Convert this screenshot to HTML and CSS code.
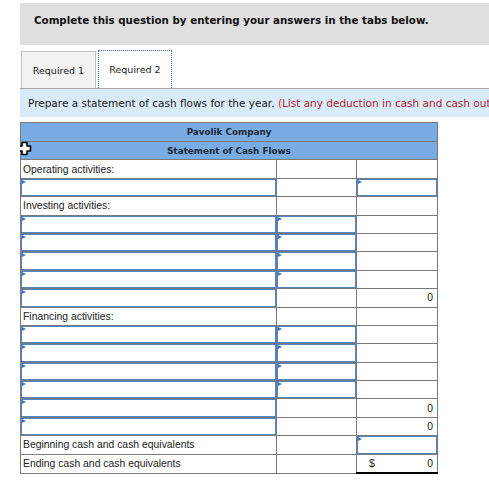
FILE: index.html
```html
<!DOCTYPE html>
<html>
<head>
<meta charset="utf-8">
<link rel="stylesheet" href="styles.css">
</head>
<body>
<div class="page">
  <div class="instr">Complete this question by entering your answers in the tabs below.</div>
  <div class="tabs">
    <div class="tab">Required 1</div>
    <div class="tab active">Required 2</div>
  </div>
  <div class="prompt">Prepare a statement of cash flows for the year. <span class="red">(List any deduction in cash and cash outflows as negative amounts.)</span></div>
  <div class="tablewrap">
    <table class="sheet">
      <colgroup><col class="c1"><col class="c2"><col class="c3"></colgroup>
      <tr class="hd hd1"><td colspan="3">Pavolik Company</td></tr>
      <tr class="hd hd2"><td colspan="3">Statement of Cash Flows</td></tr>
      <tr><td class="lbl">Operating activities:</td><td></td><td></td></tr>
      <tr><td class="in"></td><td></td><td class="in"></td></tr>
      <tr><td class="lbl">Investing activities:</td><td></td><td></td></tr>
      <tr><td class="in"></td><td class="in"></td><td></td></tr>
      <tr><td class="in"></td><td class="in"></td><td></td></tr>
      <tr><td class="in"></td><td class="in"></td><td></td></tr>
      <tr><td class="in"></td><td class="in"></td><td></td></tr>
      <tr><td class="in"></td><td class="topk"></td><td class="num">0</td></tr>
      <tr><td class="lbl">Financing activities:</td><td></td><td></td></tr>
      <tr><td class="in"></td><td class="in"></td><td></td></tr>
      <tr><td class="in"></td><td class="in"></td><td></td></tr>
      <tr><td class="in"></td><td class="in"></td><td></td></tr>
      <tr><td class="in"></td><td class="in"></td><td></td></tr>
      <tr><td class="in"></td><td class="topk"></td><td class="num topk">0</td></tr>
      <tr><td class="in"></td><td></td><td class="num topk">0</td></tr>
      <tr><td class="lbl">Beginning cash and cash equivalents</td><td></td><td class="in"></td></tr>
      <tr><td class="lbl">Ending cash and cash equivalents</td><td></td><td class="num topk total"><span class="cur">$</span><span>0</span></td></tr>
    </table>
    <svg class="cursor" width="15" height="15" viewBox="0 0 15 15"><path d="M5 1.5 H10 V5 H13.5 V10 H10 V13.5 H5 V10 H1.5 V5 H5 Z" fill="#fff" stroke="#000" stroke-width="1.6" stroke-linejoin="round"/></svg>
  </div>
</div>
</body>
</html>
```
FILE: styles.css
```css
html, body {
  margin: 0;
  padding: 0;
  background: #fff;
}
.page {
  margin-left: 20px;
  padding-top: 3px;
  overflow: hidden;
  font-family: "DejaVu Sans", Verdana, sans-serif;
  color: #111;
}
.instr {
  box-sizing: border-box;
  height: 42px;
  background: #e0e0e0;
  padding: 11px 0 0 14px;
  font-weight: bold;
  font-size: 10.3px;
  white-space: nowrap;
}
.tabs {
  display: flex;
  align-items: flex-end;
  gap: 2px;
  margin-top: 5px;
  border-bottom: 1px solid #a8a8a8;
  padding-left: 1px;
}
.tab {
  box-sizing: border-box;
  width: 75px;
  height: 37px;
  background: #f2f2f2;
  border: 1px solid #bdbdbd;
  border-bottom: none;
  display: flex;
  align-items: center;
  justify-content: center;
  font-size: 9.5px;
  color: #1b1b1b;
}
.tab.active {
  width: 74px;
  height: 38px;
  background: #fff;
  border: 1px dotted #3f6fb8;
  border-bottom: none;
}
.prompt {
  box-sizing: border-box;
  height: 28px;
  background: #d9eaf8;
  padding: 8px 0 0 8px;
  font-size: 10.5px;
  white-space: nowrap;
  overflow: hidden;
  color: #1c1c1c;
}
.red {
  color: #b3242c;
}
.tablewrap {
  position: relative;
  margin-top: 5px;
}
.sheet {
  border-collapse: collapse;
  width: 417px;
  table-layout: fixed;
  font-family: "Liberation Sans", Arial, sans-serif;
  font-size: 10.4px;
  color: #222;
}
.c1 { width: 256px; }
.c2 { width: 80px; }
.c3 { width: 81px; }
.sheet td {
  border: 1px solid #7a7a7a;
  padding: 0;
  height: 17.4px;
  position: relative;
}
.sheet .hd td {
  background: #79ace4;
  text-align: center;
  font-family: "DejaVu Sans", Verdana, sans-serif;
  font-weight: bold;
  font-size: 8.8px;
  color: #1d2733;
}
.sheet .hd1 td { height: 18px; }
.sheet .lbl {
  padding-left: 2px;
  white-space: nowrap;
}
.sheet .num {
  text-align: right;
  padding-right: 4px;
}
.sheet .topk {
  border-top: 1px solid #000;
}
.sheet .total {
  border-bottom: 2px solid #000;
}
.cur {
  float: left;
  padding-left: 12px;
}
.sheet .in::after {
  content: "";
  position: absolute;
  top: 0;
  left: 0;
  right: 0;
  bottom: 0;
  border: 1px solid #5283c3;
}
.sheet .in::before {
  content: "";
  position: absolute;
  top: 1px;
  left: 1px;
  width: 0;
  height: 0;
  border-left: 4px solid #3f77c0;
  border-top: 2px solid transparent;
  border-bottom: 2px solid transparent;
}
.cursor {
  position: absolute;
  left: -3px;
  top: 19px;
}
```
